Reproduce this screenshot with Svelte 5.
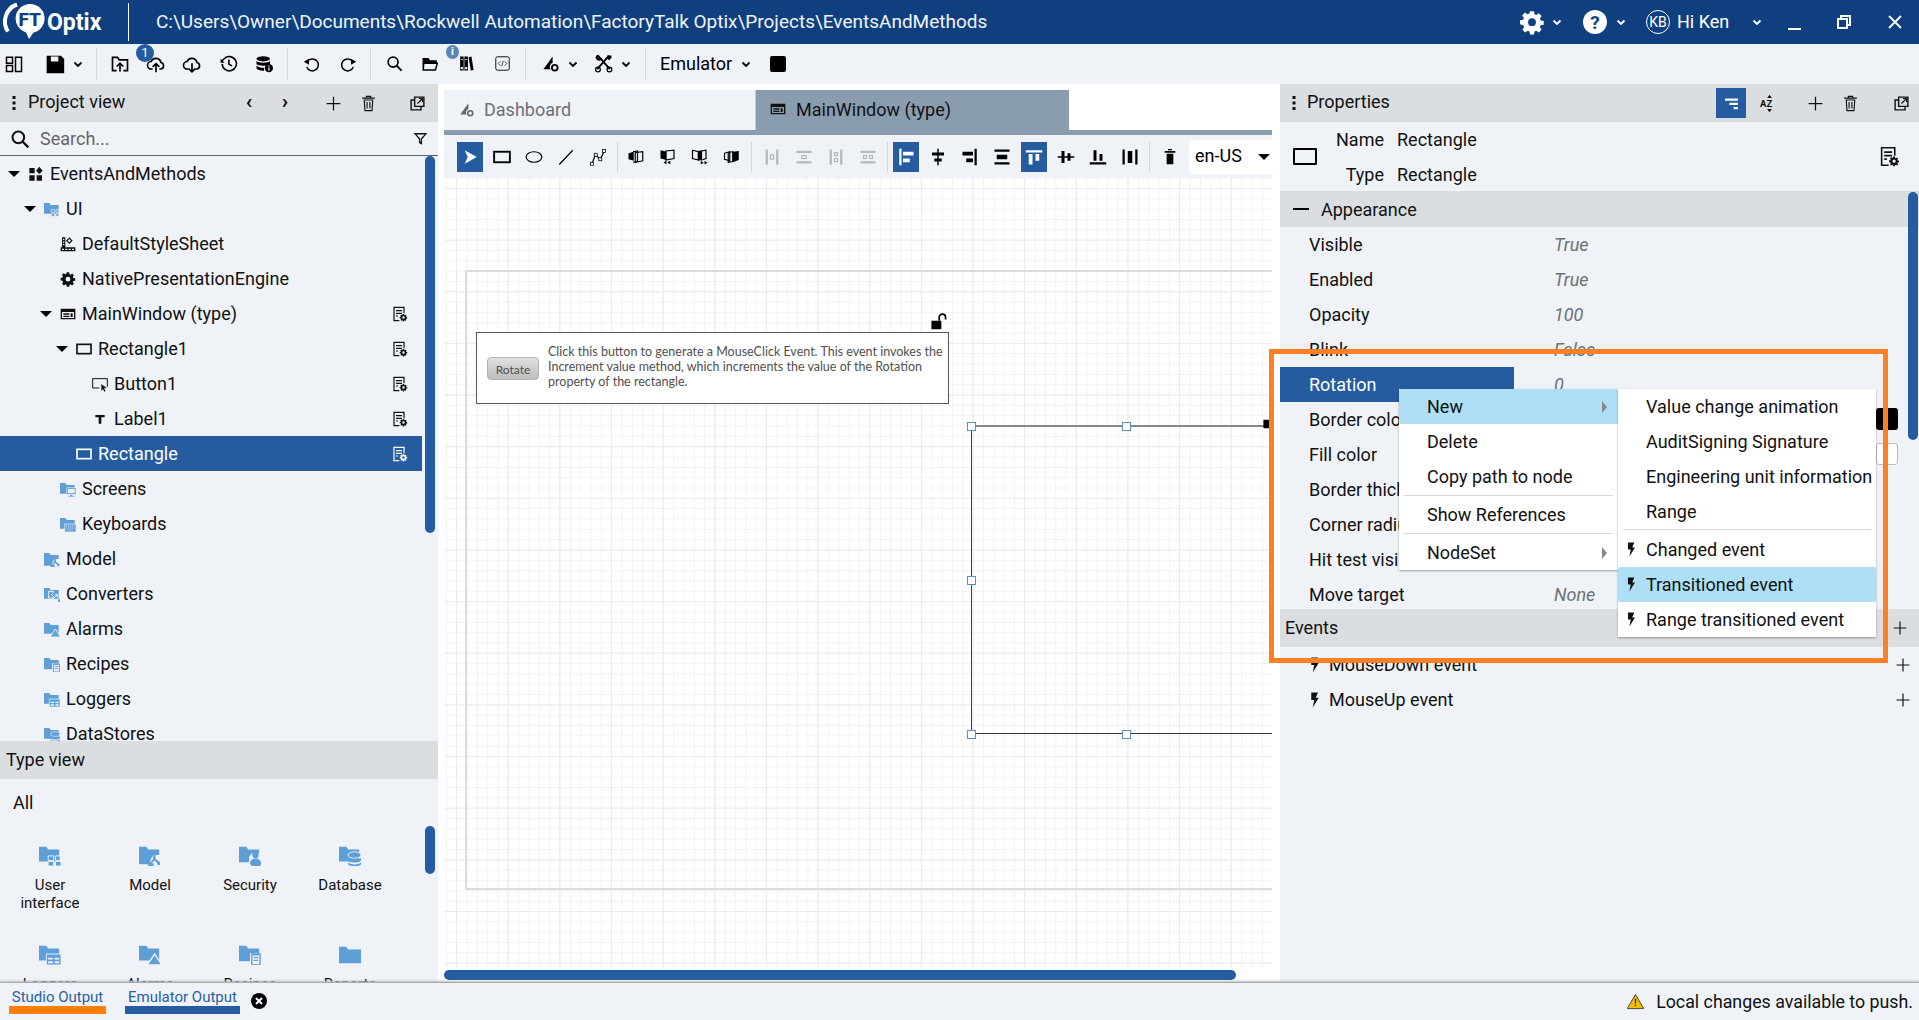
<script>
  const S = 'fill="none" stroke="currentColor" stroke-width="2"';
  const T = 'fill="none" stroke="currentColor" stroke-width="1.6"';
  const gearPath = 'M10.2 2h3.6l.5 2.8 1.7.7 2.3-1.6 2.6 2.6-1.6 2.3.7 1.7 2.8.5v3.6l-2.8.5-.7 1.7 1.6 2.3-2.6 2.6-2.3-1.6-1.7.7-.5 2.8h-3.6l-.5-2.8-1.7-.7-2.3 1.6-2.6-2.6 1.6-2.3-.7-1.7L1 14v-3.6l2.8-.5.7-1.7L2.9 5.9l2.6-2.6 2.3 1.6 1.7-.7zM12 8.6a3.6 3.6 0 1 0 0 7.2 3.6 3.6 0 0 0 0-7.2z';
  const bolt = '<path d="M7 2h9l-3 7h4L9 22l2-10H7z"/>';
  const folder = 'M0 3h8l2 3h12v13H0z';
  const icons = {
    panels: `<path d="M2 3h8v8H2zM2 14h8v8H2zM14 3h8v19h-8z" ${S}/>`,
    save: '<path fill-rule="evenodd" d="M2 2h17l4 4v17H2zM7 3v6h9V3z"/>',
    folderUp: `<path d="M8 20H3V4h6l2 3h10v13h-5" ${S}/><path d="M12 21v-9M8 15l4-4 4 4" ${S}/>`,
    cloudUp: `<path d="M8 18H6.5a4.5 4.5 0 0 1-.4-9 6.2 6.2 0 0 1 11.8 1.2A4 4 0 0 1 18 18h-2" ${S}/><path d="M12 22v-10M8 15.5l4-4 4 4" ${S}/>`,
    cloudDown: `<path d="M8 18H6.5a4.5 4.5 0 0 1-.4-9 6.2 6.2 0 0 1 11.8 1.2A4 4 0 0 1 18 18h-2" ${S}/><path d="M12 11v10M8 17.5l4 4 4-4" ${S}/>`,
    history: `<path d="M4 12.5A9 9 0 1 0 6.5 6L3.5 9" ${S}/><path d="M2 6v5h5z"/><path d="M12.5 7v6l4 2" ${S}/>`,
    db: '<ellipse cx="11" cy="5" rx="9" ry="3.5"/><path d="M2 8c2 3 16 3 18 0v4c-2 3-16 3-18 0zM2 14c2 3 9 3 10 3v4c-3 0-8-.5-10-3z"/><circle cx="18.5" cy="17.5" r="5.5"/><path d="M17.8 14h1.6v1.5h-1.6zM17.8 16.5h1.6V21h-1.6z" fill="#eff3f7"/>',
    undo: `<path d="M6 8.5A8 8 0 1 1 5 16" ${S}/><path d="M1 9l7-4v8z"/>`,
    redo: `<path d="M18 8.5A8 8 0 1 0 19 16" ${S}/><path d="M23 9l-7-4v8z"/>`,
    search: '<circle cx="10" cy="10" r="7" fill="none" stroke="currentColor" stroke-width="2.4"/><path d="M15 15l7 7" fill="none" stroke="currentColor" stroke-width="2.8"/>',
    folderOpen: '<path fill-rule="evenodd" d="M2 4h8l2 3h9v3h2l-3 11H2zM4.5 12l-.5 7h14.5l2-7z"/>',
    books: '<path fill-rule="evenodd" d="M3 2h5v20H3zM9 2h5v20H9zM15 3l4-1 3 19-4 1zM4 17v3h3v-3zM10 17v3h3v-3zM4 6v1h3V6zM10 6v1h3V6z"/>',
    code: `<rect x="2.5" y="2.5" width="19" height="19" rx="2.5" fill="none" stroke="currentColor" stroke-width="1.3"/><path d="M9 9l-3 3 3 3M15 9l3 3-3 3M13 8l-2 8" fill="none" stroke="currentColor" stroke-width="1"/>`,
    dash: `<path d="M2 20L15 2v9a6 6 0 0 0-3 9z"/><circle cx="18" cy="18" r="4" fill="none" stroke="currentColor" stroke-width="2.6"/>`,
    tools: `<path d="M5 2l15 17M19 2L4 19" fill="none" stroke="currentColor" stroke-width="2.4"/><circle cx="5" cy="19.5" r="3" ${T}/><circle cx="19.5" cy="19.5" r="3" ${T}/><path d="M2 5a4 4 0 0 1 4-4l-1 3 2 2 3-1a4 4 0 0 1-6 3zM17 2h5v3l-3 3-3-3z"/>`,
    popout: `<path d="M8 3h13v13H8z" ${S}/><path d="M8 7H3v14h14v-5" ${S}/><path d="M12 12l6-6M14 5h5v5" fill="none" stroke="currentColor" stroke-width="1.5"/>`,
    trash: `<path d="M6 7h12l-1 15H7zM3 4.5h18M9 4V2h6v2M10 10v9M14 10v9" ${T}/>`,
    plus: '<path d="M1 11h22v2H1zM11 1h2v22h-2z"/>',
    filter: '<path d="M1 3h22l-8.5 10v9l-5-3v-6zM5.5 5.5L11.5 12v5l1 .7V12l6-6.500z" fill-rule="evenodd"/>',
    docgear: `<path d="M11 22H3V2h15v9M6 7h9M6 11h9M6 15h3" fill="none" stroke="currentColor" stroke-width="1.8"/><path transform="translate(11 11) scale(.52)" fill-rule="evenodd" d="${gearPath}"/>`,
    project: '<path d="M2 3h8v8H2zM2 14h8v8H2zM13 14h8v8h-8zM17 1l5 6-5 5-5-5z"/>',
    folderUi: `<path d="${folder}" fill="#5e9fd8"/><path d="M11 13h5v4h-5zM18 13h4v4h-4zM11 19h5v4h-5zM18 19h4v4h-4z" fill="#5e9fd8" stroke="#eff3f7" stroke-width="1"/>`,
    sheet: '<path fill-rule="evenodd" d="M3 2h5v15H3zM4.500 4v2h2V4zM4.500 8v2h2V8zM4.500 12v2h2v-2zM14 2l5 5-5 5-5-5zM14 4.500L11.500 7l2.500 2.500L16.500 7zM1 17h22v6H1zM3 19v2h3v-2zM8 19v2h3v-2zM13 19v2h3v-2zM18 19v2h3v-2z"/>',
    gearIcon: `<path fill-rule="evenodd" d="${gearPath}"/>`,
    windowI: '<path fill-rule="evenodd" d="M1 4h22v16H1zM3 9v9h18V9zM5 11h9v2H5zM5 14.500h9v2H5zM16 11h3v5.500h-3z"/>',
    rectI: `<rect x="1.500" y="5" width="21" height="14" fill="none" stroke="currentColor" stroke-width="2.500"/>`,
    buttonI: `<path d="M11 18H1V4h22v12" fill="none" stroke="currentColor" stroke-width="1.500"/><path d="M14 12l8 6-4 .5 2.500 4-2 1-2-4-2.500 3z"/>`,
    textI: '<path d="M5 6h14v3.500h-5V19h-4V9.500H5z"/>',
    fScreens: `<path d="${folder}" fill="#5e9fd8"/><path d="M10 10h14v10H10zM15 20h4v2h3v2h-10v-2h3z" fill="#5e9fd8" stroke="#eff3f7"/><path d="M12 12h10v6H12z" fill="#eff3f7"/>`,
    fKeys: `<path d="${folder}" fill="#5e9fd8"/><path d="M7 12h17v12H7z" fill="#5e9fd8" stroke="#eff3f7"/><path d="M9 15h13M9 18h13M11 21h9" stroke="#eff3f7" stroke-dasharray="2 1" fill="none"/>`,
    fModel: `<path d="M0 3h8l2 3h12v6h-6l-3 4-1 6H0z" fill="#5e9fd8"/><path d="M17 7l3 5h-2v4l5 4v3h-3v-2l-3-3-3 3h2v3h-6v-3h2l3-4 1-5h-2z" fill="#5e9fd8"/>`,
    fConv: `<path d="${folder}" fill="#5e9fd8"/><path d="M7 8h7v2l-3 3 3 3v2H7zM11 22l9-9M20 13v4M20 13h-4" fill="none" stroke="#eff3f7" stroke-width="1.500"/><path d="M21 20h3v4h-3z" fill="#5e9fd8"/>`,
    fAlarm: `<path d="${folder}" fill="#5e9fd8"/><path d="M17 12l8 12H9z" fill="#5e9fd8" stroke="#eff3f7" stroke-width="1.500"/>`,
    fRecipe: `<path d="M0 3h8l2 3h12v5H12v9H0z" fill="#5e9fd8"/><path d="M14 12h9v12h-9zM16 10h5v3h-5z" fill="#eff3f7" stroke="#5e9fd8" stroke-width="1.500"/><path d="M16 16h5M16 19h5" stroke="#5e9fd8" stroke-width="1.300" fill="none"/>`,
    fLog: `<path d="${folder}" fill="#5e9fd8"/><path d="M8 12h16v12H8z" fill="#5e9fd8" stroke="#eff3f7"/><path d="M10 16h5v2h-5zM17 16h5v2h-5zM10 20h5v2h-5zM17 20h5v2h-5z" fill="#eff3f7"/>`,
    fDb: `<path d="${folder}" fill="#5e9fd8"/><ellipse cx="17" cy="12" rx="7" ry="3.500" fill="#5e9fd8" stroke="#eff3f7"/><path d="M10 15c2 3 12 3 14 0v3c-2 3-12 3-14 0zM10 20c2 3 12 3 14 0v2c-2 3-12 3-14 0z" fill="#5e9fd8"/>`,
    fSec: `<path d="M0 3h8l2 3h12v4h-8l-3 4v6H0z" fill="#5e9fd8"/><circle cx="18" cy="12" r="3.500" fill="#5e9fd8"/><path d="M12 21c0-7 12-7 12 0s-12 4-12 0z" fill="#5e9fd8"/>`,
    fPlain: `<path d="M0 4h8l2 3h14v15H0z" fill="#5e9fd8"/>`,
    fUi: `<path d="${folder}" fill="#5e9fd8"/><path d="M10 13h6v5h-6zM18 13h5v5h-5zM10 19h6v5h-6zM18 19h6v5h-6z" fill="#5e9fd8" stroke="#eff3f7" stroke-width="1"/>`,
    az: '<path d="M12 1l3 4H9zM12 23l-3-4h6z"/><text x="0" y="17" font-family="Roboto,sans-serif" font-weight="700" font-size="12">AZ</text>',
    tree: '<path d="M3 5h18v3H3zM9 11h12v3H9zM15 17h6v3h-6z"/>',
    sel: '<path d="M5 3l16 9-16 9 4-9z"/>',
    ellipse: `<ellipse cx="12" cy="12" rx="10.500" ry="7" ${T}/>`,
    line: `<path d="M3 22L21 3" ${T}/>`,
    poly: `<path d="M4 21L8.500 9l6.500 6 6-12" ${T}/><rect x="2" y="19" width="4" height="4" fill="#eff3f7" stroke="currentColor"/><rect x="7" y="7" width="4" height="4" fill="#eff3f7" stroke="currentColor"/><rect x="13" y="13" width="4" height="4" fill="#eff3f7" stroke="currentColor"/><rect x="18" y="2" width="4" height="4" fill="#eff3f7" stroke="currentColor"/>`,
    o1: `<path d="M2 7l7-2v12l-7-2z"/><path d="M11 6l10-1v12l-10 2z" ${T}/><path d="M8 5l6-1v14l-6 1" ${T}/>`,
    o2: `<path d="M2 3l8 2v11l-8-2z"/><path d="M9 4l11-1v11l-11 2z" ${T}/><path d="M6 19l4-2v5zM11 19l4-2v5z"/>`,
    o3: `<path d="M2 3l8 2v11l-8-2z" ${T}/><path d="M9 4l5-1v13l-5 1z"/><path d="M14 4l6-1v11l-6 2z" ${T}/><path d="M13 17l4 2.500-4 2.500zM18 17l4 2.500-4 2.500z"/>`,
    o4: `<path d="M2 7l7-2v12l-7-2z" ${T}/><path d="M7 6l6-1v13l-6 1z" ${T}/><path d="M13 5l8-1v12l-8 3z"/>`,
    d1: `<path d="M5 2v20M19 2v20" fill="none" stroke="currentColor" stroke-width="3"/><rect x="10" y="9" width="4" height="6" ${T}/>`,
    d2: `<path d="M2 5h20M2 19h20" fill="none" stroke="currentColor" stroke-width="3"/><rect x="9" y="10" width="6" height="4" ${T}/>`,
    d3: `<path d="M5 2v20M19 2v20" fill="none" stroke="currentColor" stroke-width="3"/><rect x="10" y="6" width="4" height="4" ${T}/><rect x="10" y="14" width="4" height="4" ${T}/>`,
    d4: `<path d="M2 5h20M2 19h20" fill="none" stroke="currentColor" stroke-width="3"/><rect x="6" y="10" width="4" height="4" ${T}/><rect x="14" y="10" width="4" height="4" ${T}/>`,
    a1: '<path d="M3 1h3v22H3zM8 5h14v5H8zM8 14h9v5H8z"/>',
    a2: '<path d="M11 1h2v22h-2zM4 6h16v4H4zM7 14h10v4H7z"/>',
    a3: '<path d="M18 1h3v22h-3zM2 5h14v5H2zM7 14h9v5H7z"/>',
    a4: '<path d="M2 2h20v3H2zM2 19h20v3H2zM5 9h14v6H5z"/>',
    a5: '<path d="M1 3h22v3H1zM5 8h5v14H5zM14 8h5v9h-5z"/>',
    a6: '<path d="M1 11h22v2H1zM6 4h4v16H6zM14 7h4v10h-4z"/>',
    a7: '<path d="M1 19h22v3H1zM6 3h4v14H6zM14 8h4v9h-4z"/>',
    a8: '<path d="M2 2h3v20H2zM19 2h3v20h-3zM9 4h6v16H9z"/>',
    bin: '<path d="M7 7h10v16H7zM4 3h16v2.500H4zM9 0h6v2H9z"/>',
    bolt,
    warn: '<path d="M12 2L23.500 22H.5z" fill="#f6bd00" stroke="#333" stroke-width="1.200"/><path d="M11 8h2l-.3 7h-1.400zM11 16.500h2v2h-2z" fill="#222"/>',
    lock: '<path d="M2 11h14v11a1 1 0 0 1-1 1H3a1 1 0 0 1-1-1z"/><path d="M13 11V6a4.500 4.500 0 0 1 9 0v3" fill="none" stroke="currentColor" stroke-width="2.400"/>'
  };

  const tree = [
    { l: 0, c: 1, i: 'project', t: 'EventsAndMethods' },
    { l: 1, c: 1, i: 'folderUi', t: 'UI' },
    { l: 2, i: 'sheet', t: 'DefaultStyleSheet' },
    { l: 2, i: 'gearIcon', t: 'NativePresentationEngine' },
    { l: 2, c: 1, i: 'windowI', t: 'MainWindow (type)', d: 1 },
    { l: 3, c: 1, i: 'rectI', t: 'Rectangle1', d: 1 },
    { l: 4, i: 'buttonI', t: 'Button1', d: 1 },
    { l: 4, i: 'textI', t: 'Label1', d: 1 },
    { l: 3, i: 'rectI', t: 'Rectangle', d: 1, on: 1 },
    { l: 2, i: 'fScreens', t: 'Screens' },
    { l: 2, i: 'fKeys', t: 'Keyboards' },
    { l: 1, i: 'fModel', t: 'Model' },
    { l: 1, i: 'fConv', t: 'Converters' },
    { l: 1, i: 'fAlarm', t: 'Alarms' },
    { l: 1, i: 'fRecipe', t: 'Recipes' },
    { l: 1, i: 'fLog', t: 'Loggers' },
    { l: 1, i: 'fDb', t: 'DataStores' }
  ];
  const types = [
    ['fUi', 'User interface'], ['fModel', 'Model'], ['fSec', 'Security'], ['fDb', 'Database'],
    ['fLog', 'Loggers'], ['fAlarm', 'Alarms'], ['fRecipe', 'Recipes'], ['fPlain', 'Reports']
  ];
  const props = [
    ['Visible', 'True'], ['Enabled', 'True'], ['Opacity', '100'], ['Blink', 'False'],
    ['Rotation', '0', 1], ['Border color', ''], ['Fill color', ''], ['Border thickness', ''],
    ['Corner radius', ''], ['Hit test visible', ''], ['Move target', 'None']
  ];
  const shapes = ['rectI', 'ellipse', 'line', 'poly'];
  const order = ['o1', 'o2', 'o3', 'o4'];
  const dist = ['d1', 'd2', 'd3', 'd4'];
  const aligns = [['a1', 1], ['a2'], ['a3'], ['a4'], ['a5', 1], ['a6'], ['a7'], ['a8']];
  const submenuTop = ['Value change animation', 'AuditSigning Signature', 'Engineering unit information', 'Range'];
  const submenuEvents = [['Changed event'], ['Transitioned event', 1], ['Range transitioned event']];
</script>

{#snippet ic(name, s = 18)}
  <svg width={s} height={s} viewBox="0 0 24 24" fill="currentColor">{@html icons[name]}</svg>
{/snippet}

{#snippet chev()}
  <svg class="chev" width="10" height="10" viewBox="0 0 10 10"><path d="M1.500 3.500L5 7l3.500-3.500" fill="none" stroke="currentColor" stroke-width="1.800" /></svg>
{/snippet}

{#snippet dots()}
  <svg width="6" height="16" viewBox="0 0 6 16" fill="currentColor"><rect x="1.500" y="1" width="3" height="3" /><rect x="1.500" y="6.500" width="3" height="3" /><rect x="1.500" y="12" width="3" height="3" /></svg>
{/snippet}

<div class="app">
  <header class="title">
    <div class="logo">
      <svg width="46" height="44" viewBox="0 0 46 44">
        <path d="M17 4.500a18 18 0 0 0-9 27" fill="none" stroke="#fff" stroke-width="4" />
        <path d="M30 4a14.500 14.500 0 0 1 3.500 28.600L29 39l-3-6.600A14.500 14.500 0 0 1 30 4z" fill="#fff" />
        <text x="18.500" y="26" class="ft">FT</text>
      </svg>
      <span class="optix">Optix</span>
    </div>
    <span class="tdiv"></span>
    <span class="path">C:\Users\Owner\Documents\Rockwell Automation\FactoryTalk Optix\Projects\EventsAndMethods</span>
    <div class="tright">
      <span class="tgear">{@render ic('gearIcon', 26)}</span>
      <span class="tc1">{@render chev()}</span>
      <svg class="thelp" width="24" height="24" viewBox="0 0 24 24"><circle cx="12" cy="12" r="12" fill="#fff" /><text x="12" y="18.500" class="q">?</text></svg>
      <span class="tc2">{@render chev()}</span>
      <span class="kb">KB</span>
      <span class="hi">Hi Ken</span>
      <span class="tc3">{@render chev()}</span>
      <span class="wmin"></span>
      <svg class="wres" width="14" height="14" viewBox="0 0 14 14"><path d="M4 4V1h9v9h-3M1 4h9v9H1z" fill="none" stroke="#fff" stroke-width="2" /></svg>
      <svg class="wclose" width="14" height="14" viewBox="0 0 14 14"><path d="M1 1l12 12M13 1L1 13" stroke="#fff" stroke-width="1.800" /></svg>
    </div>
  </header>

  <div class="tools">
    <span class="b first">{@render ic('panels')}</span>
    <span class="b m9">{@render ic('save', 20)}</span>
    <span class="cv">{@render chev()}</span>
    <span class="sep m13"></span>
    <span class="b m5">{@render ic('folderUp', 20)}</span>
    <span class="b">{@render ic('cloudUp', 20)}<em class="badge">1</em></span>
    <span class="b">{@render ic('cloudDown', 20)}</span>
    <span class="b">{@render ic('history', 19)}</span>
    <span class="b">{@render ic('db', 18)}</span>
    <span class="sep m5"></span>
    <span class="b m6">{@render ic('undo', 18)}</span>
    <span class="b">{@render ic('redo', 18)}</span>
    <span class="sep m4"></span>
    <span class="b m5">{@render ic('search', 17)}</span>
    <span class="b">{@render ic('folderOpen', 18)}</span>
    <span class="b">{@render ic('books', 17)}<em class="info">i</em></span>
    <span class="b">{@render ic('code', 17)}</span>
    <span class="sep m5"></span>
    <span class="b m6">{@render ic('dash', 17)}</span>
    <span class="cv">{@render chev()}</span>
    <span class="b m7">{@render ic('tools', 19)}</span>
    <span class="cv">{@render chev()}</span>
    <span class="sep m14"></span>
    <span class="emu">Emulator</span>
    <span class="cv m9">{@render chev()}</span>
    <span class="stop"></span>
  </div>

  <div class="main">
    <aside class="left">
      <div class="phead">
        <span class="pd">{@render dots()}</span>
        <span class="ptitle">Project view</span>
        <div class="pacts">
          <span class="a1"><b>‹</b></span>
          <span class="a2"><b>›</b></span>
          <span class="a3">{@render ic('plus', 15)}</span>
          <span class="a4">{@render ic('trash', 17)}</span>
          <span class="a5">{@render ic('popout', 17)}</span>
        </div>
      </div>
      <div class="search">
        <span class="si">{@render ic('search', 20)}</span>
        <span class="st">Search...</span>
        <span class="sf">{@render ic('filter', 15)}</span>
      </div>
      <div class="tree">
        {#each tree as r}
          <div class="row" class:on={r.on} style="padding-left:{8 + 16 * r.l}px">
            <span class="car">{#if r.c}<i></i>{/if}</span>
            <span class="ti">{@render ic(r.i, 16)}</span>
            <span class="tt">{r.t}</span>
            {#if r.d}<span class="dg">{@render ic('docgear', 16)}</span>{/if}
          </div>
        {/each}
        <span class="vs vs1"></span>
      </div>
      <div class="thead">Type view</div>
      <div class="typev">
        <div class="all">All</div>
        <div class="tgrid">
          {#each types as t}
            <div class="tcell">
              <span class="tico">{@render ic(t[0], 22)}</span>
              <span class="tlab">{t[1]}</span>
            </div>
          {/each}
        </div>
        <span class="vs vs2"></span>
      </div>
    </aside>

    <section class="center">
      <div class="tabs">
        <div class="tab off"><span class="tabi">{@render ic('dash', 15)}</span>Dashboard</div>
        <div class="tab act"><span class="tabi">{@render ic('windowI', 16)}</span>MainWindow (type)</div>
      </div>
      <div class="strip"></div>
      <div class="draw">
        <span class="d"><span class="onb">{@render ic('sel', 18)}</span></span>
        {#each shapes as s}<span class="d">{@render ic(s, 18)}</span>{/each}
        <span class="dsep"></span>
        {#each order as s}<span class="d">{@render ic(s, 18)}</span>{/each}
        <span class="dsep w8"></span>
        {#each dist as s}<span class="d grey">{@render ic(s, 18)}</span>{/each}
        <span class="dsep"></span>
        {#each aligns as s}
          <span class="d">{#if s[1]}<span class="onb">{@render ic(s[0], 18)}</span>{:else}{@render ic(s[0], 18)}{/if}</span>
        {/each}
        <span class="dsep w8"></span>
        <span class="d">{@render ic('bin', 16)}</span>
        <div class="lang"><span>en-US</span><i></i></div>
      </div>
      <div class="canvas">
        <div class="page"></div>
        <span class="lock">{@render ic('lock', 17)}</span>
        <div class="label">
          <span class="rot">Rotate</span>
          <p>Click this button to generate a MouseClick Event. This event invokes the Increment value method, which increments the value of the Rotation property of the rectangle.</p>
        </div>
        <div class="shape"></div>
        <span class="h h1"></span><span class="h h2"></span><span class="h h3"></span><span class="h h4"></span><span class="h h5"></span>
        <span class="lock2">{@render ic('lock', 17)}</span>
      </div>
      <div class="hbar"><span></span></div>
    </section>

    <aside class="right">
      <div class="phead">
        <span class="pd2">{@render dots()}</span>
        <span class="ptitle">Properties</span>
        <div class="racts">
          <span class="rb">{@render ic('tree', 17)}</span>
          <span class="r2">{@render ic('az', 19)}</span>
          <span class="r3">{@render ic('plus', 15)}</span>
          <span class="r4">{@render ic('trash', 17)}</span>
          <span class="r5">{@render ic('popout', 17)}</span>
        </div>
      </div>
      <div class="ident">
        <span class="bigrect"></span>
        <div class="nt">
          <div><span>Name</span><b>Rectangle</b></div>
          <div><span>Type</span><b>Rectangle</b></div>
        </div>
        <span class="idg">{@render ic('docgear', 21)}</span>
      </div>
      <div class="sect"><i></i>Appearance</div>
      {#each props as p}
        <div class="prow">
          <span class="plab" class:sel={p[2]}>{p[0]}</span>
          <span class="pval">{p[1]}</span>
        </div>
      {/each}
      <div class="events"><span>Events</span><span class="eplus">{@render ic('plus', 14)}</span></div>
      <div class="erow"><span class="eb">{@render ic('bolt', 18)}</span>MouseDown event<span class="ep">{@render ic('plus', 14)}</span></div>
      <div class="erow"><span class="eb">{@render ic('bolt', 18)}</span>MouseUp event<span class="ep">{@render ic('plus', 14)}</span></div>
      <span class="swatch black"></span>
      <span class="swatch white"></span>
      <span class="vs vs3"></span>
    </aside>
  </div>

  <footer class="foot">
    <span class="out o">Studio Output</span>
    <span class="out e">Emulator Output</span>
    <svg class="xc" width="16" height="16" viewBox="0 0 16 16"><circle cx="8" cy="8" r="8" fill="#000" /><path d="M5 5l6 6M11 5l-6 6" stroke="#fff" stroke-width="2" /></svg>
    <span class="warn">{@render ic('warn', 17)}</span>
    <span class="wtext">Local changes available to push.</span>
  </footer>

  <div class="menu m1">
    <div class="mi hl">New<i class="arr"></i></div>
    <div class="mi">Delete</div>
    <div class="mi">Copy path to node</div>
    <hr />
    <div class="mi">Show References</div>
    <hr />
    <div class="mi">NodeSet<i class="arr"></i></div>
  </div>
  <div class="menu m2">
    {#each submenuTop as s}<div class="mi">{s}</div>{/each}
    <hr />
    {#each submenuEvents as s}
      <div class="mi" class:hl={s[1]}><span class="mb">{@render ic('bolt', 17)}</span>{s[0]}</div>
    {/each}
  </div>
  <div class="callout"></div>
</div>

<style>
  :global(body) { margin: 0; background: #fff; overflow: hidden; }
  .app { position: relative; width: 1919px; height: 1020px; display: grid; grid-template-rows: 44px 40px 898px 38px; font-family: Roboto, "Liberation Sans", sans-serif; font-size: 18px; color: #111; overflow: hidden; }
  svg { display: block; flex: none; }
  i, em { font-style: normal; }

  .title { background: #103f80; color: #fff; display: flex; align-items: center; }
  .logo { display: flex; align-items: center; width: 128px; flex: none; }
  .ft { font: 800 19px Roboto, sans-serif; fill: #103f80; }
  .optix { font: 700 23px Roboto, sans-serif; margin-left: 1px; }
  .tdiv { width: 1px; height: 38px; background: #fff; flex: none; }
  .path { margin-left: 27px; font-size: 19px; color: #f0f4fa; white-space: nowrap; padding-bottom: 1px; }
  .tright { margin-left: auto; display: flex; align-items: center; padding-right: 17px; }
  .tgear { display: flex; }
  .tc1 { margin-left: 7px; }
  .thelp { margin-left: 21px; }
  .tc2 { margin-left: 9px; }
  .kb { margin-left: 20px; width: 22px; height: 22px; border: 1px solid #fff; border-radius: 50%; font-size: 14px; display: flex; align-items: center; justify-content: center; }
  .hi { margin-left: 7px; font-size: 18px; width: 53px; white-space: nowrap; padding-bottom: 1px; }
  .tc3 { margin-left: 22px; }
  .wmin { margin-left: 26px; width: 13px; height: 2px; background: #fff; margin-top: 14px; }
  .wres { margin-left: 36px; }
  .wclose { margin-left: 37px; }
  .q { font: 700 19px Roboto, sans-serif; fill: #103f80; text-anchor: middle; }
  .chev { color: inherit; }

  .tools { background: #eff3f7; display: flex; align-items: center; color: #000; padding-bottom: 1px; box-sizing: border-box; }
  .b { position: relative; width: 36px; height: 30px; display: flex; align-items: center; justify-content: center; flex: none; }
  .first { width: 28px; }
  .cv { width: 10px; display: flex; justify-content: center; flex: none; }
  .sep { width: 1px; height: 32px; background: #d3d7db; flex: none; }
  .m4 { margin-left: 4px; } .m5 { margin-left: 5px; } .m6 { margin-left: 6px; } .m7 { margin-left: 7px; } .m9 { margin-left: 9px; } .m13 { margin-left: 13px; } .m14 { margin-left: 14px; }
  .badge { position: absolute; left: -2px; top: -5px; width: 18px; height: 18px; border-radius: 50%; background: #245c9f; color: #fff; font-size: 13px; line-height: 18px; text-align: center; }
  .info { position: absolute; left: -2px; top: -4px; width: 13px; height: 14px; border-radius: 50%; background: #5a86bb; color: #fff; font-size: 11px; line-height: 14px; text-align: center; font-weight: 700; }
  .emu { margin-left: 14px; width: 72px; }
  .stop { margin-left: 19px; width: 16px; height: 16px; background: #000; border-radius: 2px; flex: none; }

  .main { display: grid; grid-template-columns: 438px 842px 639px; min-height: 0; }
  .left, .right { background: #eff3f7; position: relative; min-height: 0; display: flex; flex-direction: column; }
  .phead { height: 38px; background: #dbdee1; display: flex; align-items: center; flex: none; }
  .pd { width: 28px; display: flex; justify-content: center; }
  .ptitle { white-space: nowrap; line-height: 36px; height: 38px; }
  .pacts { display: flex; align-items: center; margin-left: auto; width: 200px; height: 38px; position: relative; }
  .pacts > span { position: absolute; top: 0; height: 38px; display: flex; align-items: center; justify-content: center; width: 20px; }
  .pacts b { font-weight: 700; font-size: 21px; line-height: 1; margin-top: -3px; }
  .a1 { left: 1px; } .a2 { left: 37px; } .a3 { left: 85px; } .a4 { left: 120px; } .a5 { left: 169px; }

  .search { height: 34px; border-bottom: 1px solid #5f6367; box-sizing: border-box; display: flex; align-items: center; flex: none; }
  .si { margin-left: 10px; }
  .st { margin-left: 10px; color: #666; }
  .sf { margin-left: auto; margin-right: 10px; }

  .tree { height: 585px; flex: none; overflow: hidden; position: relative; }
  .row { height: 35px; width: 422px; box-sizing: border-box; display: flex; align-items: center; white-space: nowrap; }
  .row.on { background: #245c9f; color: #fff; }
  .car { width: 20px; flex: none; }
  .car i { display: block; width: 0; height: 0; border-left: 6px solid transparent; border-right: 6px solid transparent; border-top: 6px solid #000; margin-top: 1px; }
  .ti { width: 22px; flex: none; }
  .tt { line-height: 35px; }
  .dg { margin-left: auto; margin-right: 14px; }
  .vs { position: absolute; width: 10px; background: #245c9f; border-radius: 5px; z-index: 2; }
  .vs1 { left: 425px; top: 0; height: 377px; }
  .vs2 { left: 425px; top: 47px; height: 48px; }
  .vs3 { left: 628px; top: 108px; height: 248px; }

  .thead { height: 38px; background: #dbdee1; flex: none; padding-left: 6px; line-height: 38px; }
  .typev { position: relative; flex: 1; min-height: 0; overflow: hidden; }
  .all { height: 46px; line-height: 48px; padding-left: 13px; }
  .tgrid { display: grid; grid-template-columns: repeat(4, 100px); grid-auto-rows: 99px; }
  .tcell { display: flex; flex-direction: column; align-items: center; text-align: center; font-size: 15px; line-height: 18px; }
  .tico { height: 22px; margin: 19px 0 10px; }
  .tlab { width: 80px; }

  .center { padding: 6px 8px 0 6px; display: flex; flex-direction: column; background: #fff; min-height: 0; min-width: 0; }
  .tabs { height: 40px; display: flex; flex: none; }
  .tab { height: 40px; display: flex; align-items: center; box-sizing: border-box; white-space: nowrap; padding-bottom: 2px; }
  .off { width: 312px; background: #eff3f7; color: #6d7176; padding-left: 15px; border-right: 1px solid #c8ccd0; }
  .off .tabi { color: #666; width: 25px; }
  .act { width: 313px; background: #8a9daf; padding-left: 14px; }
  .act .tabi { width: 26px; }
  .strip { height: 5px; background: #8a9daf; flex: none; }
  .draw { height: 43px; background: #eff3f7; display: flex; align-items: center; padding-left: 10px; flex: none; color: #000; }
  .d { width: 32px; height: 30px; display: flex; align-items: center; justify-content: center; flex: none; }
  .onb { width: 26px; height: 30px; background: #245c9f; color: #fff; display: flex; align-items: center; justify-content: center; }
  .grey { color: #b5b8bb; }
  .dsep { width: 6px; height: 30px; position: relative; flex: none; }
  .dsep::after { content: ""; position: absolute; left: 3px; top: 0; width: 1px; height: 30px; background: #d3d7db; }
  .w8 { width: 8px; }
  .lang { margin-left: 3px; flex: 1; height: 34px; background: #fff; display: flex; align-items: center; padding-left: 6px; border-radius: 3px 0 0 3px; }
  .lang span { padding-bottom: 2px; }
  .lang i { margin-left: auto; margin-right: 2px; border-left: 6px solid transparent; border-right: 6px solid transparent; border-top: 6px solid #000; }

  .canvas { position: relative; height: 789px; flex: none; overflow: hidden; background-color: #fff;
    background-image:
      linear-gradient(to right, #e9ebed 1px, transparent 1px),
      linear-gradient(to bottom, #e9ebed 1px, transparent 1px),
      linear-gradient(to right, #f1f2f3 1px, transparent 1px),
      linear-gradient(to bottom, #f1f2f3 1px, transparent 1px);
    background-size: 51.65px 51.65px, 51.65px 51.65px, 10.33px 10.33px, 10.33px 10.33px;
    background-position: 12px 10px, 12px 10px, 2px 10px, 2px 10px; }
  .page { position: absolute; left: 21px; top: 92px; width: 900px; height: 616px; border: 2px solid #dcdcdc; }
  .lock { position: absolute; left: 486px; top: 135px; color: #000; }
  .lock2 { position: absolute; left: 818px; top: 234px; color: #000; }
  .label { position: absolute; left: 32px; top: 154px; width: 473px; height: 72px; box-sizing: border-box; border: 1px solid #555; background: #fff; font-family: Lato, sans-serif; color: #4f4f4f; display: flex; align-items: center; }
  .rot { margin-left: 10px; width: 52px; height: 23px; box-sizing: border-box; border: 1px solid #b4b4b4; border-radius: 4px; background: linear-gradient(#e0e0e0, #bdbdbd); font-size: 12px; line-height: 23px; text-align: center; flex: none; }
  .label p { margin: -4px 0 0 9px; font-size: 12.500px; line-height: 15px; width: 405px; }
  .shape { position: absolute; left: 527px; top: 247px; width: 400px; height: 309px; border-top: 2px solid #888; border-left: 1px solid #444; border-bottom: 1px solid #333; box-sizing: border-box; }
  .h { position: absolute; width: 7px; height: 7px; background: #fff; border: 1px solid #5f8dc2; }
  .h1 { left: 523px; top: 244px; } .h2 { left: 678px; top: 244px; } .h3 { left: 523px; top: 398px; } .h4 { left: 523px; top: 552px; } .h5 { left: 678px; top: 552px; }
  .hbar { height: 15px; flex: none; }
  .hbar span { display: block; margin-top: 3px; width: 792px; height: 10px; border-radius: 5px; background: #245c9f; }

  .pd2 { width: 27px; display: flex; justify-content: center; }
  .racts { margin-left: auto; width: 300px; height: 38px; position: relative; }
  .racts > span { position: absolute; top: 4px; height: 30px; width: 30px; display: flex; align-items: center; justify-content: center; }
  .rb { left: 97px; background: #245c9f; color: #fff; }
  .r2 { left: 135px; } .r3 { left: 181px; } .r4 { left: 216px; } .r5 { left: 267px; }
  .ident { height: 69px; display: flex; align-items: center; flex: none; }
  .bigrect { width: 20px; height: 13px; border: 2px solid #000; border-radius: 1px; margin-left: 13px; flex: none; }
  .nt div { height: 35px; display: flex; align-items: center; }
  .nt span { width: 67px; text-align: right; }
  .nt b { font-weight: 400; margin-left: 13px; }
  .idg { margin-left: auto; margin-right: 19px; }
  .sect { height: 36px; background: #dbdee1; display: flex; align-items: center; flex: none; }
  .sect i { width: 16px; height: 2px; background: #000; margin: 0 12px 0 13px; }
  .prow { height: 35px; display: flex; align-items: center; flex: none; white-space: nowrap; }
  .plab { width: 234px; height: 35px; line-height: 35px; padding-left: 29px; box-sizing: border-box; }
  .plab.sel { background: #245c9f; color: #fff; }
  .pval { margin-left: 40px; font-style: italic; color: #6d7176; }
  .events { height: 38px; margin-top: -3px; background: #dbdee1; display: flex; align-items: center; justify-content: space-between; padding: 0 12px 1px 5px; box-sizing: border-box; position: relative; flex: none; }
  .erow { height: 35px; display: flex; align-items: center; padding-left: 29px; flex: none; }
  .eb { width: 23px; margin-left: -3px; }
  .ep { margin-left: auto; margin-right: 9px; }
  .swatch { position: absolute; left: 596px; width: 22px; height: 22px; border-radius: 3px; }
  .black { top: 324px; background: #000; }
  .white { top: 359px; background: #fff; border: 1px solid #bbb; box-sizing: border-box; }

  .foot { background: #eff3f7; border-top: 1px solid #a9acaf; box-shadow: 0 -1px 2px #bbb; display: flex; align-items: center; box-sizing: border-box; position: relative; z-index: 1; padding-bottom: 1px; }
  .out { font-size: 15px; color: #2a5fa5; height: 31px; line-height: 28px; box-sizing: border-box; white-space: nowrap; border-bottom: 8px solid; align-self: flex-start; text-align: center; flex: none; }
  .o { margin-left: 9px; width: 97px; border-color: #ff7f00; }
  .e { margin-left: 19px; width: 115px; border-color: #245c9f; }
  .xc { margin-left: 11px; }
  .warn { margin-left: auto; }
  .wtext { margin-left: 12px; margin-right: 6px; font-size: 17.800px; white-space: nowrap; }

  .menu { position: absolute; background: #fff; z-index: 5; box-shadow: 0 1px 2px rgba(0,0,0,.35); }
  .m1 { left: 1399px; top: 389px; width: 219px; }
  .m2 { left: 1618px; top: 389px; width: 258px; }
  .mi { height: 35px; line-height: 35px; display: flex; align-items: center; position: relative; white-space: nowrap; }
  .m1 .mi { padding-left: 28px; }
  .m2 .mi { padding-left: 28px; }
  .mi.hl { background: #aedff7; border-radius: 2px; }
  .mb { position: absolute; left: 5px; top: 9px; }
  .menu hr { border: 0; border-top: 1px solid #d6d8da; margin: 2px 5px; height: 0; }
  .m1 hr { margin: 1px 5px 1px; }
  .m2 hr { margin: 0 5px 2px; }
  .arr { position: absolute; right: 11px; top: 12px; border-top: 6px solid transparent; border-bottom: 6px solid transparent; border-left: 5px solid #888; }
  .callout { position: absolute; left: 1269px; top: 349px; width: 619px; height: 314px; box-sizing: border-box; border: 5px solid #ff7f27; z-index: 6; pointer-events: none; }
</style>
